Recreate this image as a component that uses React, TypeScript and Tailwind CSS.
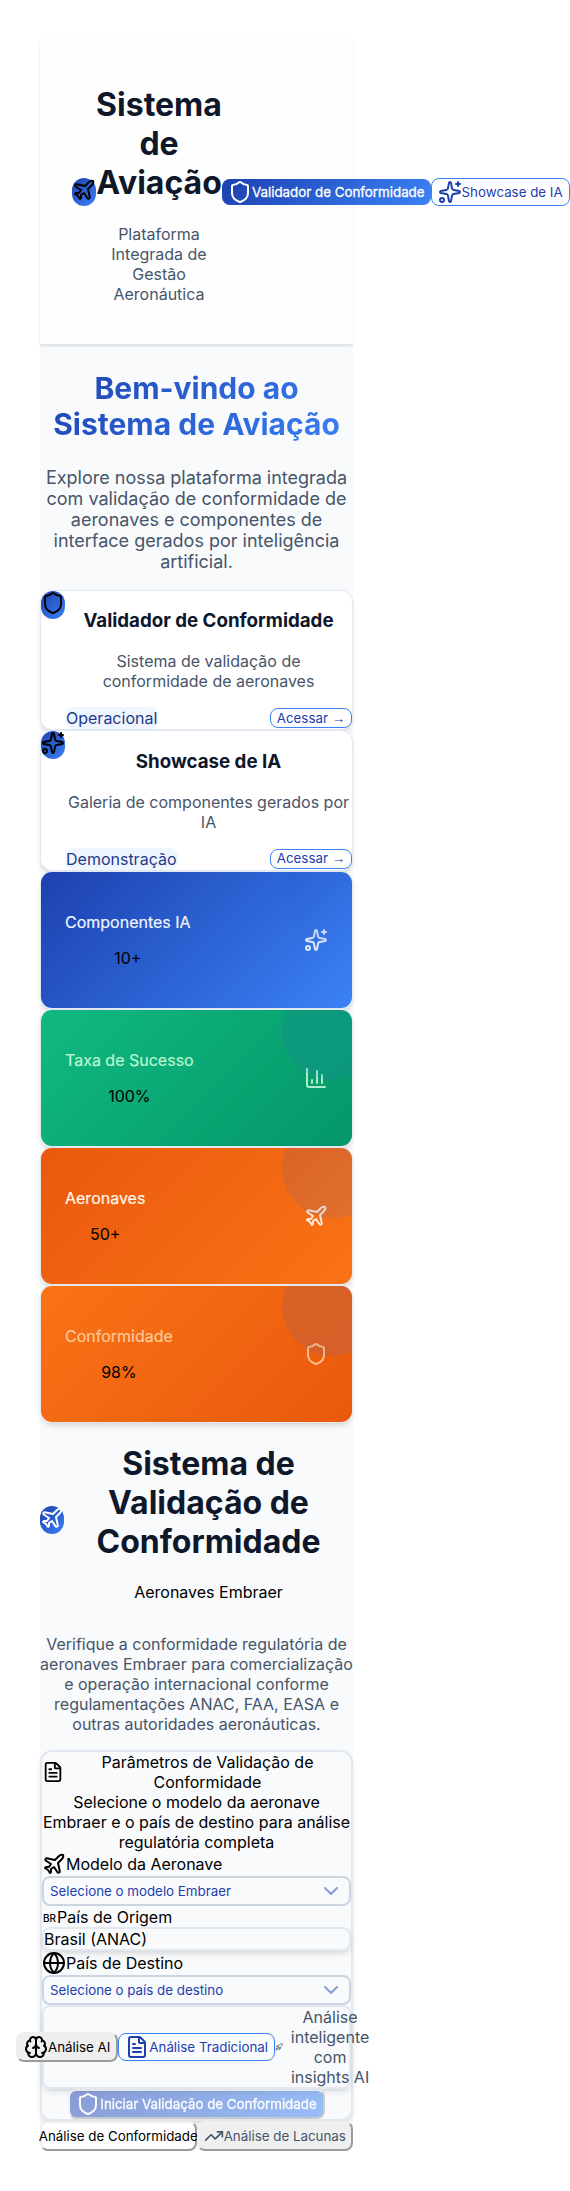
import type { ReactNode } from "react";
import {
  Brain,
  ChartColumn,
  ChevronDown,
  FileText,
  Globe,
  Plane,
  Rocket,
  Shield,
  Sparkles,
  TrendingUp,
} from "lucide-react";

const outset = "border-2 border-[#efefef] [border-style:outset]";

function IconBadge({ children, className = "" }: { children: ReactNode; className?: string }) {
  return (
    <div
      className={`h-7 w-6 shrink-0 rounded-xl bg-linear-135 from-[#1e40af] to-[#3b82f6] ${className}`}
    >
      {children}
    </div>
  );
}

function ModuleCard({
  icon,
  title,
  text,
  status,
}: {
  icon: ReactNode;
  title: string;
  text: string;
  status: string;
}) {
  return (
    <div className="flex items-start rounded-xl border border-[#e2e8f0] bg-white shadow-md">
      <IconBadge className="text-black">{icon}</IconBadge>
      <div className="flex-1">
        <h3 className="my-[18.72px] text-center text-[18.72px] font-bold text-[#0f172a]">{title}</h3>
        <p className="mb-4 text-center text-[#475569]">{text}</p>
        <div className="flex items-center justify-between">
          <span className="rounded-lg border border-transparent bg-[#eff6ff] text-[#1e3a8a]">
            {status}
          </span>
          <button className="h-5 rounded-lg border border-[#3b82f6] bg-white px-1.5 text-[13.333px] leading-4 text-[#1e40af]">
            Acessar <span className="font-['Liberation_Sans',sans-serif]">→</span>
          </button>
        </div>
      </div>
    </div>
  );
}

function StatCard({
  label,
  value,
  icon,
  gradient,
  tone,
}: {
  label: string;
  value: string;
  icon: ReactNode;
  gradient: string;
  tone: string;
}) {
  return (
    <div className="rounded-xl border border-[#e2e8f0] shadow-md">
      <div
        className={`relative flex h-[136px] items-center justify-between overflow-hidden rounded-[11px] p-6 ${gradient}`}
      >
        <div>
          <p className={`my-4 [-webkit-text-stroke:0.2px_currentColor] ${tone}`}>{label}</p>
          <p className="my-4 text-center">{value}</p>
        </div>
        <div className={`${tone} opacity-90`}>{icon}</div>
        <div className="absolute -top-[30px] -right-[30px] size-[100px] rounded-full bg-linear-135 from-[#1e40af] to-[#3b82f6] opacity-[0.12]" />
      </div>
    </div>
  );
}

function SelectField({ children }: { children: ReactNode }) {
  return (
    <button className="flex h-[30px] w-full items-center justify-between rounded-lg border-2 border-[#cbd5e1] px-1.5 text-[13.333px] text-[#1e40af]">
      <span>{children}</span>
      <ChevronDown className="size-6 opacity-50" />
    </button>
  );
}

export default function App() {
  return (
    <div className="min-h-[2191px] w-[570px] overflow-hidden bg-white py-10 pl-10 font-[Inter,sans-serif] text-base leading-[normal] text-black">
      <div className="w-[313px] bg-[#f8fafc]">
        <header className="flex items-center border-b border-[#e2e8f0] bg-[#fefefe] px-8 py-6 shadow-sm">
          <div className="flex w-[150px] shrink-0 items-center">
            <IconBadge>
              <Plane className="size-6" />
            </IconBadge>
            <div className="w-[126px] shrink-0 text-center">
              <h1 className="my-[21.44px] text-[32px] font-bold text-[#0f172a]">
                Sistema de Aviação
              </h1>
              <p className="mb-4 px-2 text-[#475569]">Plataforma Integrada de Gestão Aeronáutica</p>
            </div>
          </div>
          <div className="flex shrink-0 items-center">
            <button className="flex h-[26px] items-center rounded-lg bg-linear-135 from-[#1e40af] to-[#3b82f6] px-1.5 text-[13.333px] whitespace-nowrap text-white [-webkit-text-stroke:0.3px_white]">
              <Shield className="size-6" />
              Validador de Conformidade
            </button>
            <button className="flex h-7 items-center rounded-lg border border-[#3b82f6] bg-white px-1.5 text-[13.333px] whitespace-nowrap text-[#1e40af]">
              <Sparkles className="size-6" />
              Showcase de IA
            </button>
          </div>
        </header>

        <section className="text-center">
          <h2 className="my-[24.9px] bg-linear-135 from-[#1e40af] to-[#3b82f6] bg-clip-text text-[30px] font-bold text-transparent">
            Bem-vindo ao Sistema de Aviação
          </h2>
          <p className="mb-[18px] text-[18px] leading-[21px] text-[#475569]">
            Explore nossa plataforma integrada com validação de conformidade de aeronaves e
            componentes de interface gerados por inteligência artificial.
          </p>
        </section>

        <ModuleCard
          icon={<Shield className="size-6" />}
          title="Validador de Conformidade"
          text="Sistema de validação de conformidade de aeronaves"
          status="Operacional"
        />
        <ModuleCard
          icon={<Sparkles className="size-6" />}
          title="Showcase de IA"
          text="Galeria de componentes gerados por IA"
          status="Demonstração"
        />

        <StatCard
          label="Componentes IA"
          value="10+"
          icon={<Sparkles className="size-6" />}
          gradient="bg-linear-135 from-[#1e40af] to-[#3b82f6]"
          tone="text-[#eff6ff]"
        />
        <StatCard
          label="Taxa de Sucesso"
          value="100%"
          icon={<ChartColumn className="size-6" />}
          gradient="bg-linear-135 from-[#10b981] to-[#059669]"
          tone="text-[#bbf7d0]"
        />
        <StatCard
          label="Aeronaves"
          value="50+"
          icon={<Plane className="size-6" />}
          gradient="bg-linear-135 from-[#ea580c] to-[#f97316]"
          tone="text-[#fff7ed]"
        />
        <StatCard
          label="Conformidade"
          value="98%"
          icon={<Shield className="size-6" />}
          gradient="bg-linear-135 from-[#f97316] to-[#ea580c]"
          tone="text-[#fdc998]"
        />

        <section className="text-center">
          <div className="flex items-center">
            <IconBadge className="text-white">
              <Plane className="size-6" />
            </IconBadge>
            <div className="flex-1">
              <h1 className="my-[21.44px] text-[32px] font-bold text-[#0f172a]">
                Sistema de Validação de Conformidade
              </h1>
              <p className="mb-4">Aeronaves Embraer</p>
            </div>
          </div>
          <p className="-mx-1 my-4 text-[#475569]">
            Verifique a conformidade regulatória de
            <br />
            aeronaves Embraer para comercialização
            <br />e operação internacional conforme
            <br />
            regulamentações ANAC, FAA, EASA e<br />
            outras autoridades aeronáuticas.
          </p>
        </section>

        <section className="rounded-xl border-2 border-[#e2e8f0] shadow-md">
          <div className="flex items-center text-center">
            <FileText className="h-6 w-[22px] shrink-0" />
            <div className="flex-1">Parâmetros de Validação de Conformidade</div>
          </div>
          <div className="text-center">
            Selecione o modelo da aeronave Embraer e o país de destino para análise regulatória
            completa
          </div>
          <label className="flex h-6 items-center">
            <Plane className="size-6" />
            Modelo da Aeronave
          </label>
          <SelectField>Selecione o modelo Embraer</SelectField>
          <label className="flex h-[21px] items-center">
            <span className="w-[15px] pt-[3px] pl-px text-[10px] font-medium">BR</span>
            País de Origem
          </label>
          <div className="h-6 rounded-lg border-2 border-[#e2e8f0] shadow-md">Brasil (ANAC)</div>
          <label className="flex h-6 items-center">
            <Globe className="size-6" />
            País de Destino
          </label>
          <SelectField>Selecione o país de destino</SelectField>
          <div className="flex h-[84px] items-center justify-center rounded-lg border-2 border-[#e2e8f0] shadow-md">
            <button
              className={`flex h-[30px] shrink-0 items-center rounded-lg bg-[#efefef] px-1.5 text-[13.333px] ${outset}`}
            >
              <Brain className="size-6" />
              Análise AI
            </button>
            <button className="flex h-7 shrink-0 items-center rounded-lg border border-[#3b82f6] bg-[#f8fafc] px-1.5 text-[13.333px] whitespace-nowrap text-[#1e40af]">
              <FileText className="size-6" />
              Análise Tradicional
            </button>
            <div className="flex shrink-0 items-center text-[#475569]">
              <Rocket className="h-6 w-2" />
              <div className="w-[94px] px-1 text-center">Análise inteligente com insights AI</div>
            </div>
          </div>
          <div className="flex justify-center">
            <button
              className={`flex h-[30px] items-center rounded-lg bg-linear-135 from-[#1e40af] to-[#3b82f6] px-1.5 text-[13.333px] text-white opacity-50 [-webkit-text-stroke:0.3px_white] ${outset}`}
            >
              <Shield className="size-6" />
              Iniciar Validação de Conformidade
            </button>
          </div>
        </section>

        <div className="grid grid-cols-2 text-[13.333px]">
          <button
            className={`flex h-[30px] items-center justify-center rounded-lg bg-white whitespace-nowrap ${outset}`}
          >
            Análise de Conformidade
          </button>
          <button
            className={`flex h-[30px] items-center justify-center rounded-lg bg-[#efefef] whitespace-nowrap text-[#475569] ${outset}`}
          >
            <TrendingUp className="size-5" />
            Análise de Lacunas
          </button>
        </div>
      </div>
    </div>
  );
}
